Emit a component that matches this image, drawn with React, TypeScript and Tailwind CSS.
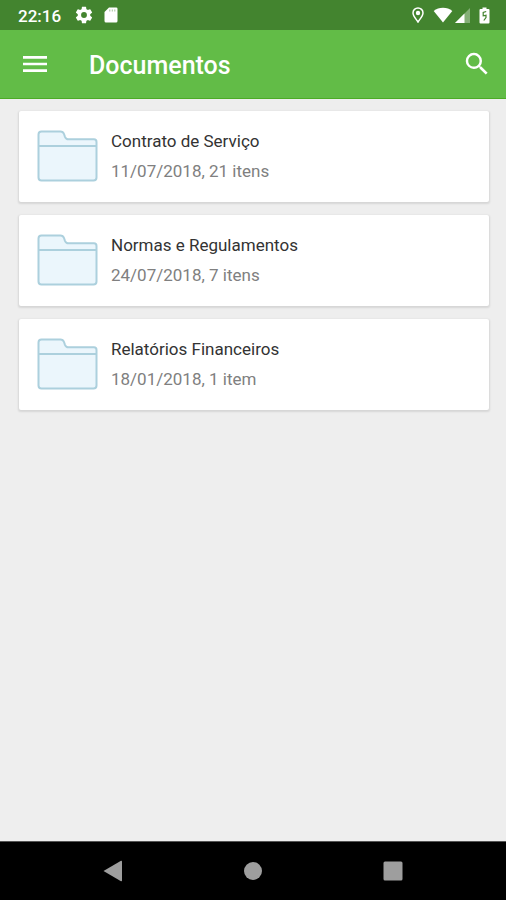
interface Folder {
  name: string;
  date: string;
  count: string;
}

const folders: Folder[] = [
  { name: "Contrato de Serviço", date: "11/07/2018", count: "21 itens" },
  { name: "Normas e Regulamentos", date: "24/07/2018", count: "7 itens" },
  { name: "Relatórios Financeiros", date: "18/01/2018", count: "1 item" },
];

const FolderIcon = () => (
  <svg viewBox="0 0 62 52" className="w-[62px] h-[52px] shrink-0" aria-hidden="true">
    <path
      d="M1.500 47.500V4.500Q1.500 1.500 4.500 1.500H23.500Q26 1.500 27 4L28 6.800Q29 9.300 31.500 9.300H57Q59.500 9.300 59.500 12V47.500Q59.500 50.500 56.500 50.500H4.500Q1.500 50.500 1.500 47.500Z"
      fill="#ebf6fc"
      stroke="#acd0dd"
      strokeWidth="2"
    />
    <path d="M2 16H59" stroke="#acd0dd" strokeWidth="2" />
  </svg>
);

const StatusBar = () => (
  <div className="flex items-center h-[30px] bg-[#43842f] pl-[18px] pr-4 text-white">
    <span className="text-[17px] leading-5 font-medium pt-0.5">22:16</span>
    {/* Settings */}
    <svg viewBox="0 0 24 24" className="w-5 h-5 ml-[13px]" fill="currentColor" aria-hidden="true">
      <path d="M19.430 12.980c.04-.32.07-.64.07-.98s-.03-.66-.07-.98l2.110-1.650c.19-.15.24-.42.12-.64l-2-3.460c-.12-.22-.39-.3-.61-.22l-2.490 1c-.52-.4-1.080-.73-1.690-.98l-.38-2.650A.49.49 0 0 0 14 2h-4c-.25 0-.46.18-.49.42l-.38 2.650c-.61.25-1.170.59-1.690.98l-2.490-1c-.23-.09-.49 0-.61.22l-2 3.460c-.13.22-.07.49.12.64l2.110 1.650c-.04.32-.07.65-.07.98s.03.66.07.98l-2.110 1.650c-.19.15-.24.42-.12.64l2 3.460c.12.22.39.3.61.22l2.490-1c.52.4 1.080.73 1.690.98l.38 2.650c.03.24.24.42.49.42h4c.25 0 .46-.18.49-.42l.38-2.650c.61-.25 1.170-.59 1.690-.98l2.490 1c.23.09.49 0 .61-.22l2-3.460c.12-.22.07-.49-.12-.64zM12 15.500a3.500 3.500 0 1 1 0-7 3.500 3.500 0 0 1 0 7z" />
    </svg>
    {/* SD card */}
    <svg viewBox="0 0 14 16" className="w-3.5 h-4 ml-2.5" aria-hidden="true">
      <path d="M5 .5H12.200Q13.500.5 13.500 1.800V14Q13.500 15.500 12 15.500H2Q.5 15.500.5 14V5Z" fill="currentColor" />
      <path d="M5.800 2.500V4.500M8.300 2.500V4.500M10.800 2.500V4.500" stroke="#43842f" strokeWidth=".8" opacity=".6" />
    </svg>

    <div className="flex items-center ml-auto">
      {/* Location */}
      <svg viewBox="0 0 12 16" className="w-3 h-4" aria-hidden="true">
        <path
          d="M6 15C4 11.800 1 8.900 1 5.900a5 5 0 0 1 10 0C11 8.900 8 11.800 6 15Z"
          fill="none"
          stroke="currentColor"
          strokeWidth="1.500"
        />
        <circle cx="6" cy="6" r="2.200" fill="currentColor" />
      </svg>
      {/* Wifi */}
      <svg viewBox="0 0 20 16" className="w-5 h-4 ml-[9px]" aria-hidden="true">
        <path d="M10 15.500.7 4Q4.600.7 10 .7T19.300 4Z" fill="currentColor" />
      </svg>
      {/* Signal */}
      <svg viewBox="0 0 15 15" className="w-[15px] h-[15px] ml-0.5" aria-hidden="true">
        <path d="M0 15 15 0V15Z" fill="currentColor" opacity=".35" />
        <path d="M0 15 9.500 5.500V15Z" fill="currentColor" />
      </svg>
      {/* Battery */}
      <svg viewBox="0 0 11 17" className="w-[11px] h-[17px] ml-[9px]" aria-hidden="true">
        <path d="M3.500.5h4V2H9.500Q10.500 2 10.500 3V15.500Q10.500 16.500 9.500 16.500H1.500Q.5 16.500.5 15.500V3Q.5 2 1.500 2h2Z" fill="currentColor" />
        <path d="M7.200 4.500 4.200 5.500V8.800L7 8.300V10.500L4.800 13.500" fill="none" stroke="#43842f" strokeWidth="1.200" />
      </svg>
    </div>
  </div>
);

const AppBar = () => (
  <header className="flex items-center h-[69px] bg-[#62bc47] border-b border-[#4cab26] pl-[19px] pr-3.5 text-white">
    <button type="button" aria-label="Menu">
      <svg viewBox="0 0 24 24" className="w-8 h-8" fill="currentColor" aria-hidden="true">
        <path d="M3 18h18v-2H3v2zm0-5h18v-2H3v2zm0-7v2h18V6H3z" />
      </svg>
    </button>
    <h1 className="ml-[38px] pt-1 text-[25px] leading-8 font-medium">Documentos</h1>
    <button type="button" aria-label="Buscar" className="ml-auto">
      <svg viewBox="0 0 24 24" className="w-[30px] h-[30px]" fill="currentColor" aria-hidden="true">
        <path d="M15.500 14h-.79l-.28-.27A6.471 6.471 0 0 0 16 9.500 6.500 6.500 0 1 0 9.500 16c1.610 0 3.090-.59 4.230-1.570l.27.28v.79l5 4.990L20.490 19l-4.990-5zm-6 0C7.010 14 5 11.990 5 9.500S7.010 5 9.500 5 14 7.010 14 9.500 11.990 14 9.500 14z" />
      </svg>
    </button>
  </header>
);

const FolderCard = ({ folder }: { folder: Folder }) => (
  <li>
    <a
      href="#"
      className="flex items-center h-[91px] bg-white rounded-xs pl-[18px] pr-4 pb-px shadow-[0_1px_2px_1px_rgba(0,0,0,0.1)]"
    >
      <FolderIcon />
      <div className="ml-3">
        <div className="text-[17px] leading-[30px] text-[#333]">{folder.name}</div>
        <div className="text-[17px] leading-[30px] text-[#808080]">
          {folder.date}, {folder.count}
        </div>
      </div>
    </a>
  </li>
);

const NavBar = () => (
  <nav className="flex items-center justify-center h-[59px] bg-black border-t border-[#555] text-[#9e9e9e]">
    <button type="button" aria-label="Voltar" className="flex justify-center w-35">
      <svg viewBox="0 0 20 22" className="w-5 h-[22px]" fill="currentColor" aria-hidden="true">
        <path d="M.5 11 18 .8Q19 .5 19 1.500V20.500Q19 21.500 18 21.200Z" />
      </svg>
    </button>
    <button type="button" aria-label="Início" className="flex justify-center w-35">
      <svg viewBox="0 0 18 18" className="w-[18px] h-[18px]" fill="currentColor" aria-hidden="true">
        <circle cx="9" cy="9" r="9" />
      </svg>
    </button>
    <button type="button" aria-label="Recentes" className="flex justify-center w-35">
      <svg viewBox="0 0 20 20" className="w-5 h-5" fill="currentColor" aria-hidden="true">
        <rect x=".5" y=".5" width="19" height="19" rx="1.500" />
      </svg>
    </button>
  </nav>
);

export default function App() {
  return (
    <div className="flex flex-col min-h-screen bg-[#eeeeee] font-[Roboto,sans-serif]">
      <StatusBar />
      <AppBar />
      <main className="flex-1 pl-[19px] pr-[17px] pt-3">
        <ul className="flex flex-col gap-[13px]">
          {folders.map((folder) => (
            <FolderCard key={folder.name} folder={folder} />
          ))}
        </ul>
      </main>
      <NavBar />
    </div>
  );
}
